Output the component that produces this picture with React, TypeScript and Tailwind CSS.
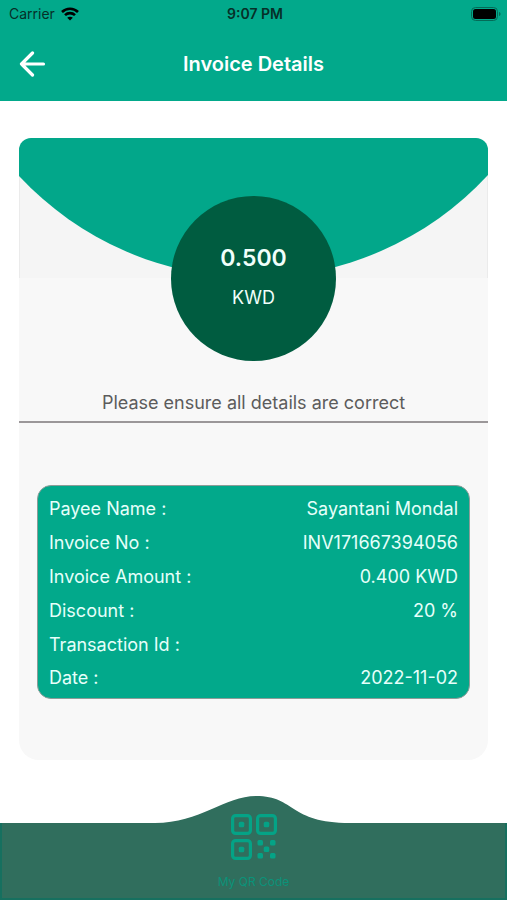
const details = [
  { label: "Payee Name :", value: "Sayantani Mondal" },
  { label: "Invoice No :", value: "INV171667394056" },
  { label: "Invoice Amount :", value: "0.400 KWD" },
  { label: "Discount :", value: "20 %" },
  { label: "Transaction Id :", value: "" },
  { label: "Date :", value: "2022-11-02" },
];

function WifiIcon() {
  return (
    <svg className="h-[14px] w-[18px]" viewBox="0 0 18 14" fill="none" stroke="currentColor" strokeWidth="2.6" aria-hidden="true">
      <path d="M1 5C5.5.6 12.500.6 17 5" />
      <path d="M4 8.100C6.800 5.400 11.200 5.400 14 8.100" />
      <path d="M9 13.500 6.200 10.700C7.800 9.300 10.200 9.300 11.800 10.700Z" fill="currentColor" stroke="none" />
    </svg>
  );
}

function BatteryIcon() {
  return (
    <svg className="h-[14px] w-[30px]" viewBox="0 0 30 14" aria-hidden="true">
      <rect x="0.500" y="0.500" width="26" height="13" rx="4" fill="none" stroke="#046b57" />
      <rect x="2" y="2" width="23" height="10" rx="2.500" fill="#000" />
      <path d="M28 5v4c2-.6 2-3.400 0-4Z" fill="#046b57" />
    </svg>
  );
}

function BackIcon() {
  return (
    <svg className="h-[26px] w-[27px]" viewBox="0 0 27 26" fill="none" stroke="currentColor" strokeWidth="3.2" strokeLinecap="round" strokeLinejoin="round" aria-hidden="true">
      <path d="M13.500 2 2.500 13l11 11M2.500 13h22" />
    </svg>
  );
}

function QrIcon() {
  return (
    <svg className="h-[46px] w-[46px]" viewBox="0 0 46 46" fill="none" aria-hidden="true">
      <g stroke="currentColor" strokeWidth="3.2">
        <rect x="1.600" y="1.600" width="17.800" height="17.800" rx="3" />
        <rect x="26.600" y="1.600" width="17.800" height="17.800" rx="3" />
        <rect x="1.600" y="26.600" width="17.800" height="17.800" rx="3" />
      </g>
      <g fill="currentColor">
        <rect x="7.750" y="7.750" width="5.500" height="5.500" rx="1.500" />
        <rect x="32.750" y="7.750" width="5.500" height="5.500" rx="1.500" />
        <rect x="7.750" y="32.750" width="5.500" height="5.500" rx="1.500" />
        <rect x="26.500" y="26" width="5.500" height="5.500" rx="1.500" />
        <rect x="39" y="26" width="5.500" height="5.500" rx="1.500" />
        <rect x="32.750" y="32.500" width="5.500" height="5.500" rx="1.500" />
        <rect x="26.500" y="39" width="5.500" height="5.500" rx="1.500" />
        <rect x="39" y="39" width="5.500" height="5.500" rx="1.500" />
      </g>
    </svg>
  );
}

export default function App() {
  return (
    <div className="flex min-h-screen flex-col bg-white font-['Inter','Liberation_Sans',sans-serif]">
      <header className="bg-[#02a98b]">
        <div className="grid h-7 grid-cols-3 items-center pr-1.5 pl-[9px] text-sm text-[#062f28]">
          <div className="flex items-center gap-1.5">
            <span>Carrier</span>
            <span className="text-black"><WifiIcon /></span>
          </div>
          <span className="text-center font-semibold">9:07 PM</span>
          <div className="flex justify-end"><BatteryIcon /></div>
        </div>
        <div className="grid h-[73px] grid-cols-[40px_1fr_40px] items-center px-[19px] pb-0.5 text-white">
          <button type="button" aria-label="Back" className="flex h-10 items-center"><BackIcon /></button>
          <h1 className="text-center text-xl leading-6 font-semibold">Invoice Details</h1>
        </div>
      </header>

      <main className="flex-1 px-[19px] pt-[37px] pb-9">
        <section className="overflow-hidden rounded-t-[12px] rounded-b-[20px] bg-[#f8f8f8]">
          <div className="relative flex flex-col items-center pt-[58px]">
            <div className="absolute inset-x-0 top-0 h-[140px] border-x border-[#ebebeb] bg-[#f5f5f5]" />
            <svg className="absolute inset-x-0 top-0 h-[140px] w-full" viewBox="0 0 469 140" preserveAspectRatio="none" aria-hidden="true">
              <path d="M0 0H469V37A320 320 0 0 1 0 38Z" fill="#02a78a" />
            </svg>
            <div className="relative flex size-[165px] flex-col items-center justify-center gap-3.5 rounded-full bg-[#005c40] pb-1 text-[#f0fffb]">
              <span className="text-[23px] leading-7 font-semibold">0.500</span>
              <span className="text-lg leading-6">KWD</span>
            </div>
          </div>
          <p className="mt-7 border-b-2 border-[#9b9799] pb-1 text-center text-lg leading-7 text-[#5c5c5c]">
            Please ensure all details are correct
          </p>
          <div className="px-[18px] pt-[62px] pb-[61px]">
            <dl className="rounded-[14px] border border-[#8d9c98] bg-[#02a98b] px-[11px] pt-1.5 pb-1 text-lg text-[#e6fffa]">
              {details.map((row) => (
                <div key={row.label} className="flex h-[34px] items-center justify-between last:h-8">
                  <dt>{row.label}</dt>
                  <dd>{row.value}</dd>
                </div>
              ))}
            </dl>
          </div>
        </section>
      </main>

      <footer className="relative h-[104px]">
        <svg className="absolute inset-0 h-full w-full" viewBox="0 0 507 104" preserveAspectRatio="none" aria-hidden="true">
          <path d="M0 27H155C200 27 225 0 256 0C296 0 288 27 350 27H507V104H0Z" fill="#306e5d" />
          <path d="M1 27V103H506V27" fill="none" stroke="#16705f" strokeWidth="2" />
        </svg>
        <a href="#qr" className="relative mx-auto flex w-24 flex-col items-center gap-3.5 pt-[18px]">
          <span className="text-[#04a386]"><QrIcon /></span>
          <span className="text-xs leading-4 text-[#0b9279]">My QR Code</span>
        </a>
      </footer>
    </div>
  );
}
